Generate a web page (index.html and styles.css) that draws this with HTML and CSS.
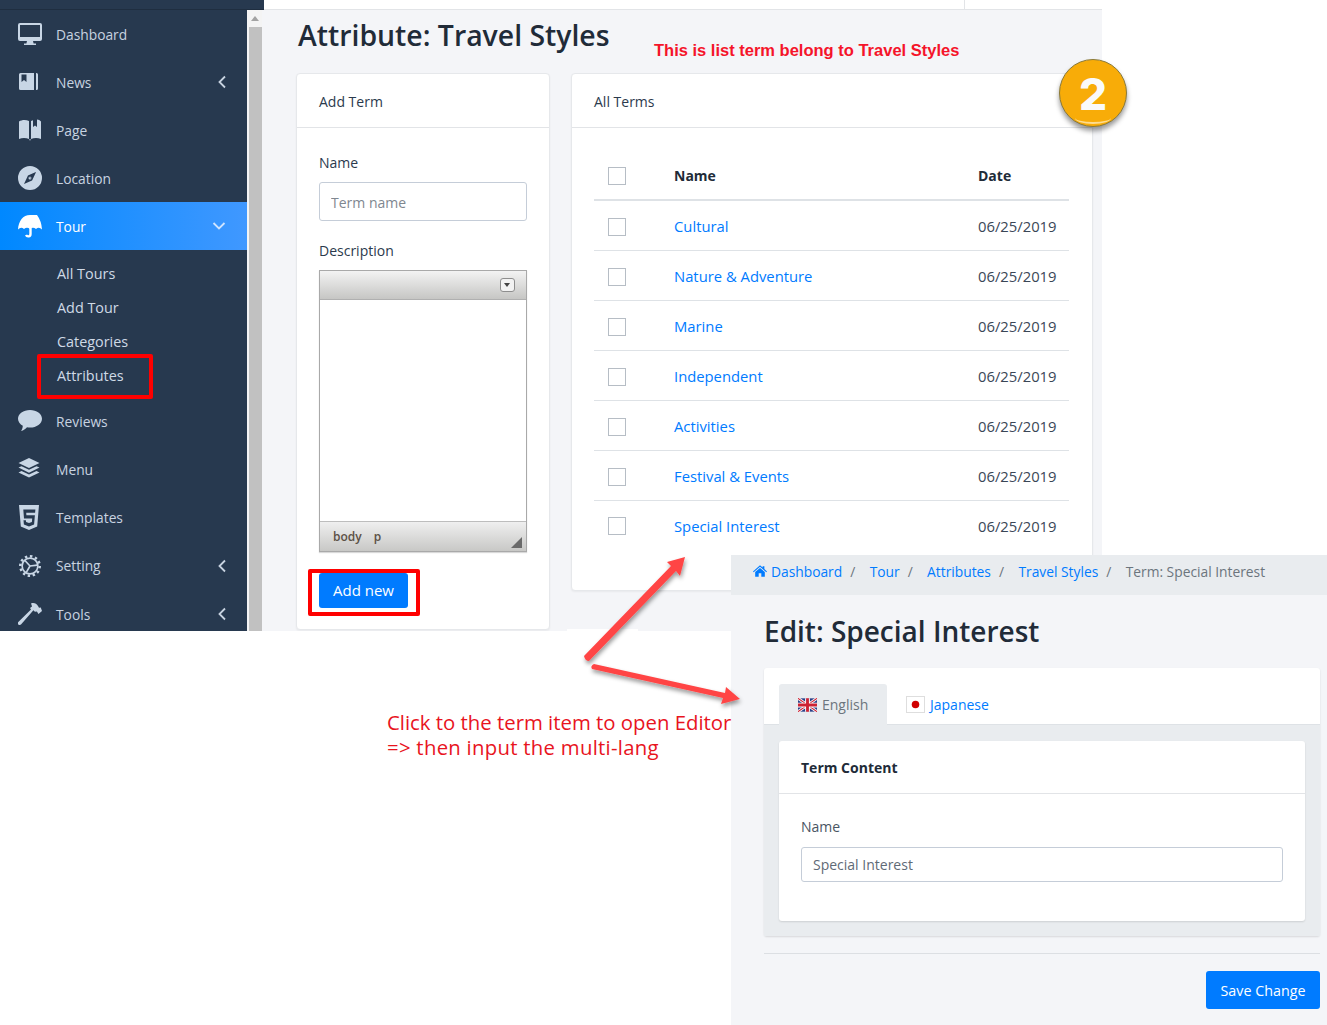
FILE: index.html
```html
<!DOCTYPE html>
<html lang="en">
<head>
    <meta charset="UTF-8">
    <title>Attribute: Travel Styles</title>
    <link rel="stylesheet" href="styles.css">
</head>
<body>

<div class="canvas">

    <!-- first screenshot: term list -->
    <div class="shot shot-list">
        <div class="topbar">
            <div class="topbar-brand"></div>
            <div class="topbar-rest"><span class="topbar-tick"></span></div>
        </div>
        <div class="shot-body">
            <nav class="sidebar">
                <a class="nav-item">
                    <svg class="nav-icon" viewBox="0 0 24 22"><path fill="#c8d6e5" d="M2 0h20a2 2 0 0 1 2 2v14a2 2 0 0 1-2 2h-7l.6 2.4H18V22H6v-1.600h2.400L9 18H2a2 2 0 0 1-2-2V2a2 2 0 0 1 2-2zm0 2v12h20V2z"/></svg>
                    <span>Dashboard</span>
                </a>
                <a class="nav-item">
                    <svg class="nav-icon" viewBox="0 0 24 22"><path fill="#c8d6e5" d="M1 3.500A1.500 1.500 0 0 1 2.500 2H16v17H2.500A1.500 1.500 0 0 1 1 17.500zM18 2h.5A1.500 1.500 0 0 1 20 3.500v14a1.500 1.500 0 0 1-1.500 1.500H18z"/><path fill="#27394f" d="M3.500 3.500h5v7.500L6 9l-2.500 2z"/></svg>
                    <span>News</span>
                    <svg class="nav-caret" viewBox="0 0 10 14"><path d="M8 1.500 2.500 7 8 12.500"/></svg>
                </a>
                <a class="nav-item">
                    <svg class="nav-icon" viewBox="0 0 24 22"><path fill="#c8d6e5" d="M1 2.500C4 .5 8 .5 11 2v18c-3-1.500-7-1.500-10 0zM13 2l2-.8V8l2-1.500L19 8V.6c1.500.2 3 .7 4 1.900v17.500c-3-1.500-7-1.500-10 0z"/><path fill="#c8d6e5" d="M11.300 20h1.400L12 22z"/></svg>
                    <span>Page</span>
                </a>
                <a class="nav-item">
                    <svg class="nav-icon" viewBox="0 0 24 24"><path fill="#c8d6e5" fill-rule="evenodd" d="M12 0a12 12 0 1 1 0 24 12 12 0 0 1 0-24zm6 6-8 3.500L6 18l8-3.500z"/><circle cx="12" cy="12" r="1.500" fill="#c8d6e5"/><path fill="#27394f" d="M18 6l-4 8.500-4.500-4.500z" opacity=".3"/></svg>
                    <span>Location</span>
                </a>
                <a class="nav-item nav-active">
                    <svg class="nav-icon" viewBox="0 0 24 24"><path fill="#fff" d="M12 1C5 1 .5 7 0 15.500Q3 12.500 6 15 9 12.500 12 15 15 12.500 18 15 21 12.500 24 15.500 23.500 7 19 1 12 1z"/><path fill="none" stroke="#fff" stroke-width="2.400" d="M12.500 2V20c0 3-3.500 3-4.500 1"/></svg>
                    <span>Tour</span>
                    <svg class="nav-caret" viewBox="0 0 14 10"><path d="M1.500 2 7 7.500 12.500 2"/></svg>
                </a>
                <div class="subnav">
                    <a class="subnav-item">All Tours</a>
                    <a class="subnav-item">Add Tour</a>
                    <a class="subnav-item">Categories</a>
                    <a class="subnav-item">Attributes</a>
                </div>
                <a class="nav-item">
                    <svg class="nav-icon" viewBox="0 0 24 22"><path fill="#c8d6e5" d="M12 0c6.600 0 12 3.800 12 8.800s-5.400 8.800-12 8.800c-1 0-2-.1-3-.3C7.500 19 5.500 20.500 3 21c1-1.300 1.700-3 1.800-5.200C2 14.200 0 11.700 0 8.800 0 3.800 5.400 0 12 0z"/></svg>
                    <span>Reviews</span>
                </a>
                <a class="nav-item">
                    <svg class="nav-icon" viewBox="0 0 24 22"><path fill="#c8d6e5" d="M11 0l10.500 5L11 10 .5 5zM3.500 8.200 11 11.800l7.500-3.600 3 1.400L11 14.700.5 9.600zM3.500 13 11 16.600 18.500 13l3 1.400L11 19.500.5 14.400z"/></svg>
                    <span>Menu</span>
                </a>
                <a class="nav-item">
                    <svg class="nav-icon nav-icon-tall" viewBox="0 0 20 25"><path fill="#c8d6e5" fill-rule="evenodd" d="M0 0h20l-1.800 21.500L10 25l-8.200-3.500zm4.300 4.500.7 9h8.200l-.3 3.600-2.900 1-2.900-1-.2-1.900H4.500l.4 4.300 5.100 1.900 5.100-1.900.8-9.200H7.400l-.2-2.600h8.900l.3-3.200z"/></svg>
                    <span>Templates</span>
                </a>
                <a class="nav-item">
                    <svg class="nav-icon" viewBox="-1 -1 26 26"><g fill="none" stroke="#c8d6e5"><circle cx="12" cy="12" r="8.500" stroke-width="1.800"/><path stroke-width="1.800" d="M12 12 20 11M12 12 8 19M12 12 6.500 6"/><path stroke-width="2.800" stroke-dasharray="2.600 2.850" d="M12 1.500a10.500 10.500 0 1 1 0 21 10.500 10.500 0 0 1 0-21z"/></g></svg>
                    <span>Setting</span>
                    <svg class="nav-caret" viewBox="0 0 10 14"><path d="M8 1.500 2.500 7 8 12.500"/></svg>
                </a>
                <a class="nav-item">
                    <svg class="nav-icon" viewBox="0 0 24 22"><path fill="#c8d6e5" d="M13 .5c3-1 5.500 0 7 2.500l1 1.800 1.800-.3L24 8l-3.500 3-1.600-2.500-2 .3-1.500-1.600L3 21.500c-.8.700-2 .6-2.700-.1-.6-.7-.6-1.700 0-2.400L13 6.500l-1-1.500 2-1.600c-.3-1-.5-2-1-2.900z"/></svg>
                    <span>Tools</span>
                    <svg class="nav-caret" viewBox="0 0 10 14"><path d="M8 1.500 2.500 7 8 12.500"/></svg>
                </a>
            </nav>
            <div class="scrollbar"><span class="scroll-up"></span><div class="scroll-thumb"></div></div>

            <main class="list-main">
                <h1 class="page-title">Attribute: Travel Styles</h1>
                <div class="card-row">
                    <section class="card card-add">
                        <div class="card-head">Add Term</div>
                        <div class="card-body">
                            <label class="field-label">Name</label>
                            <input class="field-input" type="text" placeholder="Term name">
                            <label class="field-label field-label-desc">Description</label>
                            <div class="editor">
                                <div class="editor-top"><span class="editor-btn"></span></div>
                                <div class="editor-area"></div>
                                <div class="editor-status"><span>body</span><span>p</span><i class="editor-grip"></i></div>
                            </div>
                            <button class="btn btn-add">Add new</button>
                        </div>
                    </section>
                    <section class="card card-terms">
                        <div class="card-head">All Terms</div>
                        <div class="card-body">
                            <table class="term-table">
                                <thead>
                                    <tr><th class="col-check"><span class="check"></span></th><th class="col-name">Name</th><th class="col-date">Date</th></tr>
                                </thead>
                                <tbody>
                                    <tr><td><span class="check"></span></td><td><a>Cultural</a></td><td>06/25/2019</td></tr>
                                    <tr><td><span class="check"></span></td><td><a>Nature &amp; Adventure</a></td><td>06/25/2019</td></tr>
                                    <tr><td><span class="check"></span></td><td><a>Marine</a></td><td>06/25/2019</td></tr>
                                    <tr><td><span class="check"></span></td><td><a>Independent</a></td><td>06/25/2019</td></tr>
                                    <tr><td><span class="check"></span></td><td><a>Activities</a></td><td>06/25/2019</td></tr>
                                    <tr><td><span class="check"></span></td><td><a>Festival &amp; Events</a></td><td>06/25/2019</td></tr>
                                    <tr><td><span class="check"></span></td><td><a>Special Interest</a></td><td>06/25/2019</td></tr>
                                </tbody>
                            </table>
                        </div>
                    </section>
                </div>
            </main>
        </div>
    </div>

    <!-- second screenshot: term editor -->
    <div class="shot shot-edit">
        <div class="breadcrumb">
            <svg class="crumb-home" viewBox="0 0 16 13"><path fill="#007bff" d="M8 0l3 2.600V1h2v3.300L16 7l-.8.900L8 1.700.8 7.900 0 7zM8 3l5.500 4.700V13H9.500V9h-3v4h-4V7.700z"/></svg>
            <a>Dashboard</a><i>/</i><a>Tour</a><i>/</i><a>Attributes</a><i>/</i><a>Travel Styles</a><i>/</i><span>Term: Special Interest</span>
        </div>
        <div class="edit-main">
            <h2 class="edit-title">Edit: Special Interest</h2>
            <div class="edit-panel">
                <div class="tabs">
                    <div class="tab tab-active">
                        <svg class="flag" viewBox="0 0 20 14"><rect width="20" height="14" fill="#2a3f86"/><path stroke="#fff" stroke-width="3" d="M0 0l20 14M20 0 0 14"/><path stroke="#cc2233" stroke-width="1.200" d="M0 0l20 14M20 0 0 14"/><path stroke="#fff" stroke-width="5" d="M10 0v14M0 7h20"/><path stroke="#cc2233" stroke-width="3" d="M10 0v14M0 7h20"/></svg>
                        English
                    </div>
                    <div class="tab">
                        <svg class="flag flag-jp" viewBox="0 0 20 18"><rect x=".5" y=".5" width="19" height="17" fill="#fff" stroke="#ddd"/><circle cx="10" cy="9" r="4" fill="#d00000"/></svg>
                        <a>Japanese</a>
                    </div>
                </div>
                <div class="tab-pane">
                    <section class="term-card">
                        <div class="term-head">Term Content</div>
                        <div class="term-body">
                            <label class="term-label">Name</label>
                            <input class="term-input" type="text" value="Special Interest">
                        </div>
                    </section>
                </div>
            </div>
            <hr class="edit-rule">
            <div class="edit-actions"><button class="btn btn-save">Save Change</button></div>
        </div>
    </div>

    <!-- things drawn on top of the screenshots -->
    <div class="seam"></div>
    <div class="mark mark-attr"></div>
    <div class="mark mark-add"></div>
    <p class="note-top">This is list term belong to Travel Styles</p>
    <p class="note-click">Click to the term item to open Editor<br><span class="note-line2">=&gt; then input the multi-lang</span></p>
    <div class="badge"><span>2</span></div>

    <svg class="arrows" viewBox="0 0 1327 1025">
        <defs>
            <filter id="arrow-shadow" x="-20%" y="-20%" width="140%" height="140%"><feDropShadow dx="1" dy="3" stdDeviation="2" flood-color="#000" flood-opacity=".4"/></filter>
        </defs>
        <g fill="#ff4545" filter="url(#arrow-shadow)">
            <path d="M584 656 671 566 667 562 685 557 680 576 676 571 589 661Q585 661 584 656z"/>
            <path d="M594 664 725 693 726 687 740 699 721 704 723 698 592 669Q590 666 594 664z"/>
        </g>
    </svg>
</div>

</body>
</html>
```

FILE: styles.css
```css
* {
    box-sizing: border-box;
}
body {
    margin: 0;
    background-color: #fff;
    font-family: "Open Sans", "Noto Sans", sans-serif;
    font-size: 14px;
    color: #212529;
}
a {
    color: #007bff;
    text-decoration: none;
}
.canvas {
    position: relative;
    width: 1327px;
    height: 1025px;
    overflow: hidden;
}
.shot {
    position: absolute;
    overflow: hidden;
}

/* first screenshot */
.shot-list {
    left: 0;
    top: 0;
    width: 1102px;
    height: 631px;
    background-color: #f4f5f8;
}
.topbar {
    display: flex;
    height: 10px;
}
.topbar-brand {
    width: 264px;
    background-color: #27394f;
    border-bottom: 1px solid #1f2e40;
}
.topbar-rest {
    flex: 1;
    background-color: #fff;
    border-bottom: 1px solid #e2e4e7;
    padding-left: 700px;
}
.topbar-tick {
    display: block;
    width: 1px;
    height: 9px;
    background-color: #e2e4e7;
}
.shot-body {
    display: flex;
    height: 621px;
}
.sidebar {
    width: 247px;
    flex-shrink: 0;
    background-color: #27394f;
    font-size: 13.800px;
}
.nav-item {
    display: flex;
    align-items: center;
    height: 48px;
    padding: 0 20px 0 18px;
    color: #c8d3e0;
}
.nav-item:nth-of-type(n+7) {
    height: 48.300px;
}
.nav-icon {
    width: 24px;
    height: 24px;
    margin-right: 14px;
    flex-shrink: 0;
}
.nav-icon-tall {
    width: 22px;
    height: 25px;
    margin-right: 16px;
}
.nav-caret {
    width: 10px;
    height: 14px;
    margin-left: auto;
    fill: none;
    stroke: #c8d3e0;
    stroke-width: 1.800;
}
.nav-active {
    background: linear-gradient(90deg, #0088ff, #4098ff);
    color: #fff;
}
.nav-active .nav-caret {
    width: 14px;
    height: 10px;
    margin-right: 1px;
    stroke: #cfe4ff;
}
.subnav {
    padding: 7px 0 4px 57px;
    font-size: 14.400px;
}
.subnav-item {
    display: block;
    height: 34px;
    line-height: 34px;
    color: #cfdae6;
}
.scrollbar {
    position: relative;
    width: 15px;
    flex-shrink: 0;
    background-color: #f4f4f4;
    padding: 17px 0 0 2px;
}
.scroll-up {
    position: absolute;
    left: 4px;
    top: 6px;
    border: 4px solid transparent;
    border-top: 0;
    border-bottom: 5px solid #a3a3a3;
}
.scroll-thumb {
    height: 100%;
    background-color: #c1c1c1;
}
.list-main {
    flex: 1;
    padding-left: 35px;
}
.page-title {
    margin: 0 0 0 1px;
    height: 64px;
    line-height: 50px;
    font-size: 28.400px;
    font-weight: 600;
    color: #212b38;
}
.card-row {
    display: flex;
    align-items: flex-start;
    gap: 21px;
    margin: -1px 0 0 -1px;
}
.card {
    background-color: #fff;
    border: 1px solid #e6e8eb;
    border-radius: 4px;
    box-shadow: 0 1px 2px rgba(0, 0, 0, 0.05);
}
.card-add {
    width: 254px;
    height: 557px;
}
.card-terms {
    width: 522px;
    height: 518px;
}
.card-head {
    height: 54px;
    line-height: 55px;
    padding: 0 22px;
    border-bottom: 1px solid #e2e4e7;
    color: #2b3a4d;
}
.card-add .card-body {
    padding: 24px 21px 0 22px;
}
.field-label {
    display: block;
    height: 21px;
    line-height: 21px;
    color: #2b3a4d;
}
.field-input {
    display: block;
    width: 208px;
    height: 39px;
    margin-top: 9px;
    padding: 2px 11px 0;
    border: 1px solid #c5cdd8;
    border-radius: 3px;
    font: inherit;
}
.field-input::placeholder {
    color: #7f8790;
    opacity: 1;
}
.field-label-desc {
    margin-top: 19px;
}
.editor {
    width: 208px;
    height: 282px;
    margin-top: 9px;
    display: flex;
    flex-direction: column;
    border: 1px solid #a9a9a9;
    box-shadow: 0 1px 1px rgba(0, 0, 0, 0.15);
}
.editor-top {
    display: flex;
    justify-content: flex-end;
    align-items: center;
    height: 29px;
    padding-right: 11px;
    background: linear-gradient(#f3f3f3, #c6c6c4);
    border-bottom: 1px solid #b0b0b0;
}
.editor-btn {
    position: relative;
    width: 15px;
    height: 14px;
    border: 1px solid #8e8e8e;
    border-radius: 3px;
    background-color: #f2f2f2;
}
.editor-btn::after {
    content: "";
    position: absolute;
    left: 3px;
    top: 4px;
    border: 3.500px solid transparent;
    border-bottom: 0;
    border-top: 4px solid #444;
}
.editor-area {
    flex: 1;
    background-color: #fff;
}
.editor-status {
    position: relative;
    display: flex;
    gap: 12px;
    align-items: center;
    height: 30px;
    padding-left: 13px;
    background: linear-gradient(#efefef, #c8c8c6);
    border-top: 1px solid #bdbdbd;
    font-size: 12px;
    font-weight: 600;
    color: #5c5146;
}
.editor-grip {
    position: absolute;
    right: 4px;
    bottom: 3px;
    border-left: 11px solid transparent;
    border-bottom: 11px solid #6a6a6a;
}
.btn {
    display: block;
    border: 0;
    border-radius: 3px;
    background-color: #007bff;
    color: #fff;
    font: inherit;
}
.btn-add {
    width: 89px;
    height: 35px;
    margin-top: 21px;
    padding: 0 0 2px;
    font-size: 15px;
}
.card-terms .card-body {
    padding: 24px 22px 0;
}
.term-table {
    width: 475px;
    border-collapse: collapse;
    table-layout: fixed;
    font-size: 14.800px;
}
.term-table th, .term-table td {
    padding: 0 12px;
    text-align: left;
}
.term-table th {
    height: 48px;
    padding-bottom: 1px;
    border-bottom: 2px solid #dee2e6;
    font-size: 14px;
    font-weight: 700;
    color: #212b38;
}
.term-table td {
    height: 50px;
    padding-top: 1px;
    border-bottom: 1px solid #dee2e6;
    color: #3a4656;
}
.term-table tr:last-child td {
    padding-top: 2px;
    border-bottom: 0;
}
.term-table th:first-child {
    padding: 1px 0 0 14px;
}
.term-table td:first-child {
    padding-left: 14px;
    padding-top: 3px;
}
.col-check {
    width: 68px;
}
.col-name {
    width: 304px;
}
.check {
    display: block;
    width: 18px;
    height: 18px;
    border: 1px solid #b6bdc5;
    background-color: #fff;
}

/* second screenshot */
.shot-edit {
    left: 731px;
    top: 555px;
    width: 596px;
    height: 470px;
    background-color: #f4f5f8;
}
.breadcrumb {
    display: flex;
    align-items: center;
    height: 40px;
    padding: 0 0 8px 22px;
    background-color: #e9ecef;
    color: #6c757d;
    font-size: 13.800px;
}
.breadcrumb i {
    margin: 0 14.400px 0 8px;
    font-style: normal;
}
.crumb-home {
    width: 14px;
    height: 12px;
    margin-right: 4px;
}
.edit-main {
    padding: 0 7px 0 33px;
}
.edit-title {
    margin: 0;
    height: 73px;
    line-height: 72px;
    font-size: 28px;
    font-weight: 600;
    color: #212b38;
}
.edit-panel {
    background-color: #fff;
    border-radius: 3px;
    box-shadow: 0 1px 2px rgba(0, 0, 0, 0.12);
}
.tabs {
    display: flex;
    align-items: flex-end;
    height: 57px;
    padding: 0 15px;
    border-bottom: 1px solid #dee2e6;
}
.tab {
    display: flex;
    align-items: center;
    height: 41px;
    padding: 0 18px 0 19px;
    margin-bottom: -1px;
}
.tab-active {
    width: 108px;
    background-color: #e9ecef;
    border-radius: 3px 3px 0 0;
    color: #6c757d;
}
.flag {
    width: 19px;
    height: 14px;
    margin-right: 5px;
}
.flag-jp {
    height: 17px;
}
.tab-pane {
    padding: 16px 15px 15px;
    background-color: #e9ecef;
}
.term-card {
    height: 180px;
    background-color: #fff;
    border-radius: 3px;
    box-shadow: 0 1px 2px rgba(0, 0, 0, 0.12);
}
.term-head {
    height: 53px;
    line-height: 53px;
    padding: 0 22px;
    border-bottom: 1px solid #e2e4e7;
    font-weight: 700;
    color: #212b38;
}
.term-body {
    padding: 23px 22px 0;
}
.term-label {
    display: block;
    height: 20px;
    line-height: 20px;
    color: #4a5563;
}
.term-input {
    display: block;
    width: 482px;
    height: 35px;
    margin-top: 10px;
    padding: 0 11px;
    border: 1px solid #c5cdd8;
    border-radius: 3px;
    font: inherit;
    color: #5f6a76;
}
.edit-rule {
    margin: 17px 0;
    border: 0;
    border-top: 1px solid #dcdfe3;
}
.edit-actions {
    display: flex;
    justify-content: flex-end;
}
.btn-save {
    width: 114px;
    height: 38px;
    font-size: 14.300px;
}

/* drawn on top */
.seam {
    position: absolute;
    left: 567px;
    top: 629px;
    width: 71px;
    height: 2px;
    background-color: #fff;
}
.mark {
    position: absolute;
    border: 4px solid #f00;
    border-radius: 2px;
}
.mark-attr {
    left: 37px;
    top: 354px;
    width: 116px;
    height: 45px;
}
.mark-add {
    left: 308px;
    top: 569px;
    width: 112px;
    height: 47px;
}
.note-top {
    position: absolute;
    left: 654px;
    top: 40px;
    margin: 0;
    font-family: "Liberation Sans", Arial, sans-serif;
    font-size: 16.500px;
    font-weight: 700;
    line-height: 20px;
    color: #f5142a;
}
.note-click {
    position: absolute;
    left: 387px;
    top: 710px;
    margin: 0;
    white-space: nowrap;
    font-size: 20.350px;
    line-height: 25px;
    color: #e8141e;
}
.note-line2 {
    letter-spacing: 0.270px;
}
.badge {
    position: absolute;
    left: 1059px;
    top: 59px;
    width: 68px;
    height: 68px;
    border: 1px solid #8a7a3a;
    border-radius: 50%;
    background-color: #f8ac08;
    box-shadow: 0 4px 5px rgba(0, 0, 0, 0.4);
    text-align: center;
    font-family: "Inter", sans-serif;
    font-size: 44px;
    font-weight: 800;
    line-height: 68px;
    color: #fafafa;
}
.badge::after {
    content: "";
    position: absolute;
    left: 15px;
    right: 15px;
    bottom: 2px;
    height: 10px;
    border-bottom: 2px solid rgba(255, 236, 190, 0.75);
    border-radius: 50%;
}
.arrows {
    position: absolute;
    left: 0;
    top: 0;
    width: 1327px;
    height: 1025px;
    pointer-events: none;
}
```
